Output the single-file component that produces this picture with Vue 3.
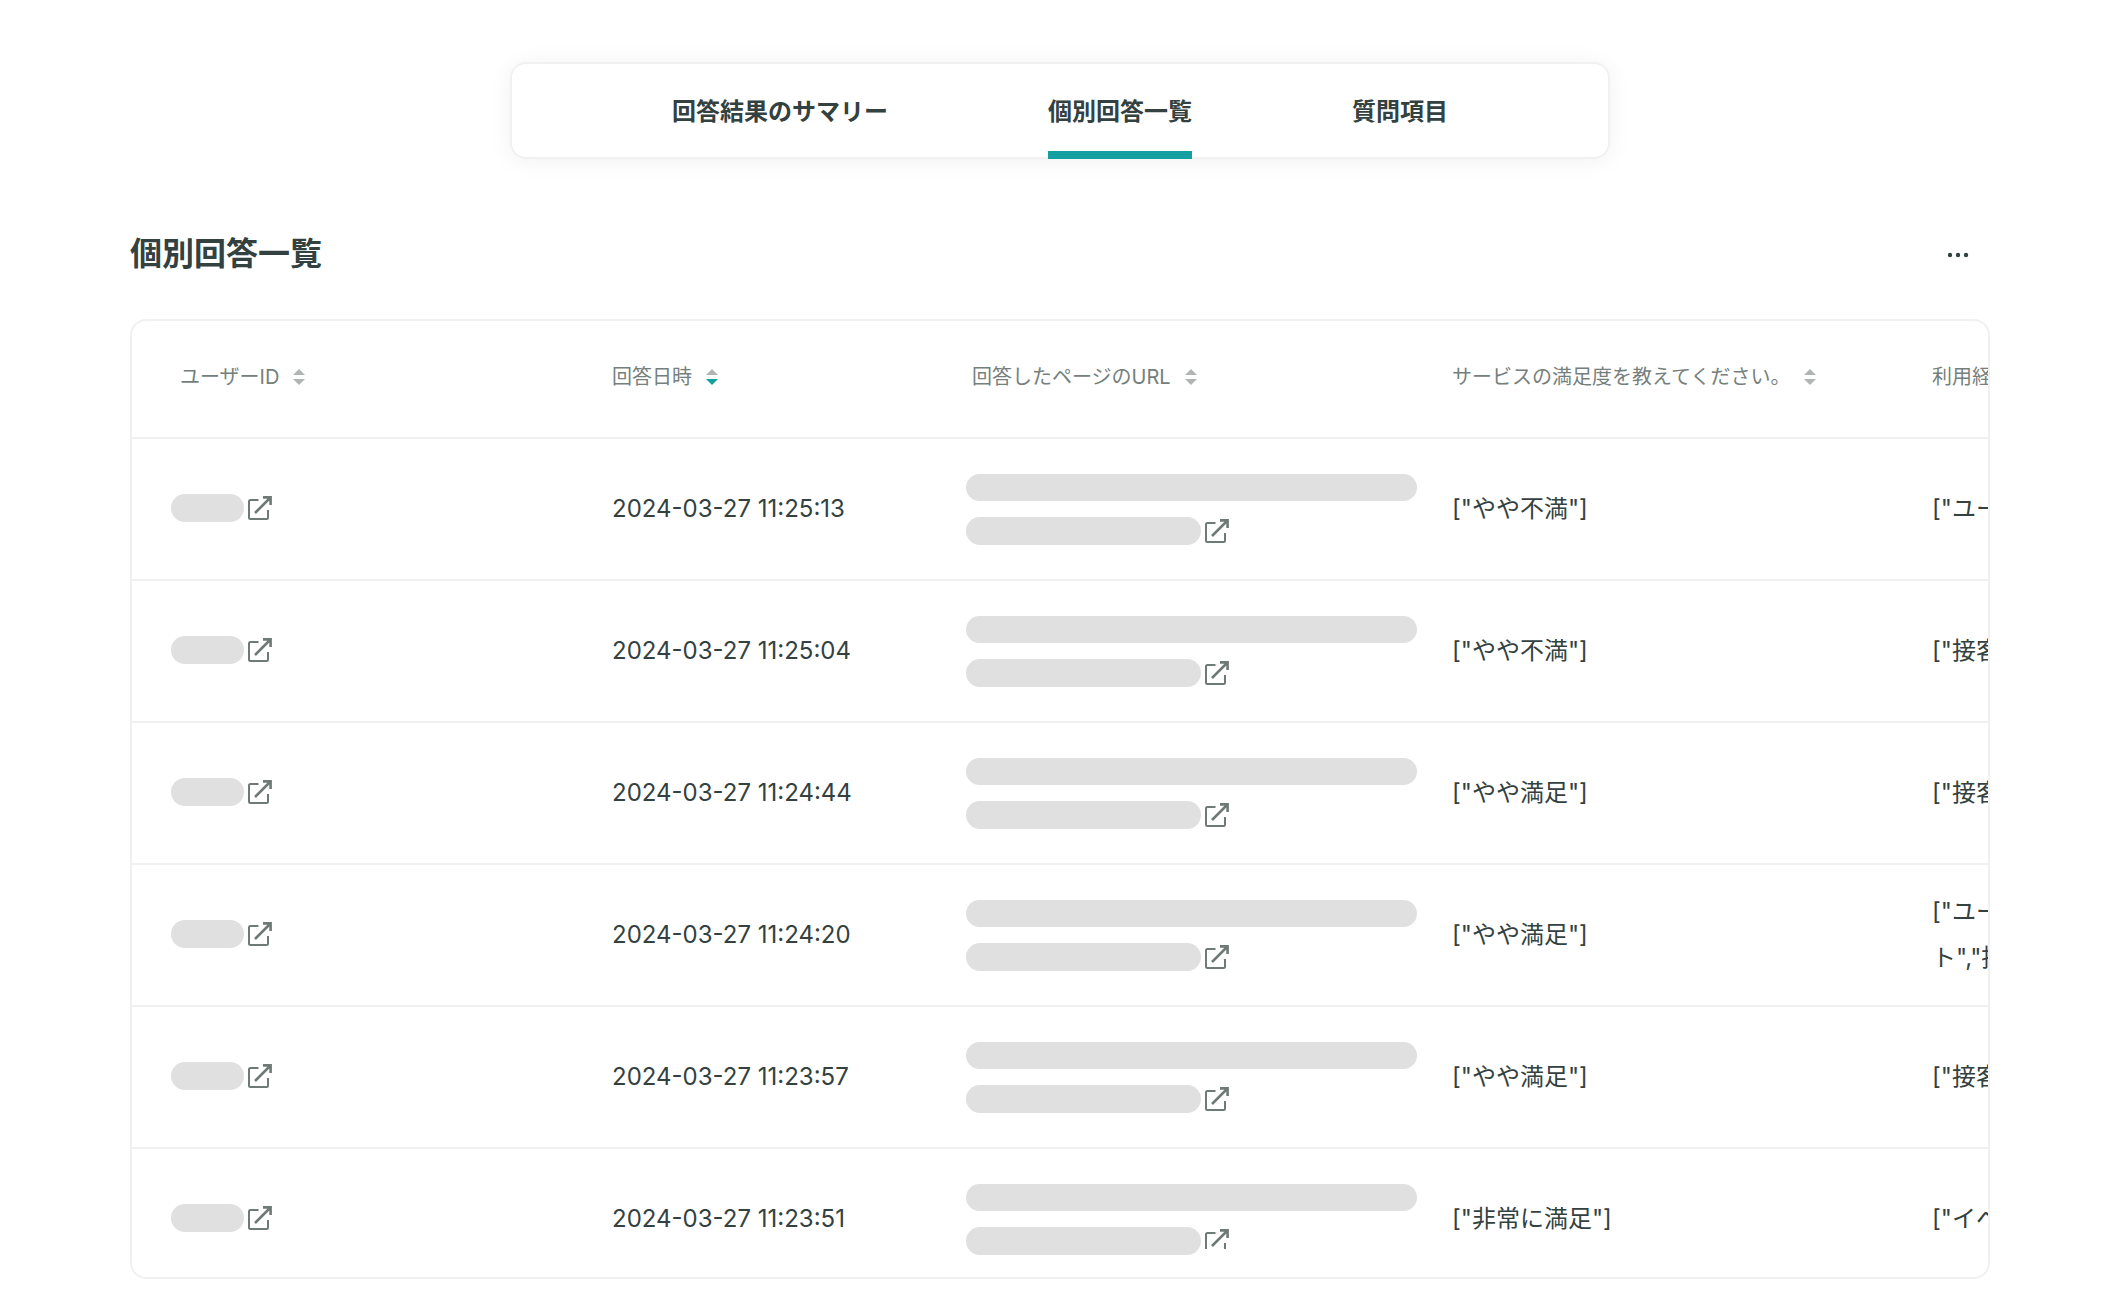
<script setup>
import { ref } from 'vue'

const tabs = ['回答結果のサマリー', '個別回答一覧', '質問項目']
const activeTab = ref('個別回答一覧')

const columns = [
  { key: 'user', label: 'ユーザーID' },
  { key: 'date', label: '回答日時' },
  { key: 'url', label: '回答したページのURL' },
  { key: 'rating', label: 'サービスの満足度を教えてください。' },
  { key: 'reason', label: '利用経験を教えてください。' },
]

const sortKey = ref('date')
const sortOrder = ref('desc')

const rows = [
  { date: '2024-03-27 11:25:13', rating: '["やや不満"]', reason: '["ユーザーサポート"]' },
  { date: '2024-03-27 11:25:04', rating: '["やや不満"]', reason: '["接客"]' },
  { date: '2024-03-27 11:24:44', rating: '["やや満足"]', reason: '["接客"]' },
  { date: '2024-03-27 11:24:20', rating: '["やや満足"]', reason: '["ユーザーサポー\nト","接客"]' },
  { date: '2024-03-27 11:23:57', rating: '["やや満足"]', reason: '["接客"]' },
  { date: '2024-03-27 11:23:51', rating: '["非常に満足"]', reason: '["イベント"]' },
]

function changeSort(key) {
  if (sortKey.value === key) {
    sortOrder.value = sortOrder.value === 'desc' ? 'asc' : 'desc'
  } else {
    sortKey.value = key
    sortOrder.value = 'desc'
  }
}

function isSorted(key, order) {
  return sortKey.value === key && sortOrder.value === order
}
</script>

<template>
  <div class="page">
    <nav class="tabs">
      <button
        v-for="tab in tabs"
        :key="tab"
        class="tab"
        :class="{ active: tab === activeTab }"
        @click="activeTab = tab"
      >
        {{ tab }}
      </button>
    </nav>

    <header class="header">
      <h1>{{ activeTab }}</h1>
      <button class="more" aria-label="メニュー">
        <svg width="22" height="6" viewBox="0 0 22 6">
          <circle cx="3" cy="3" r="2.2" />
          <circle cx="11" cy="3" r="2.2" />
          <circle cx="19" cy="3" r="2.2" />
        </svg>
      </button>
    </header>

    <main class="panel">
      <table class="answers">
        <colgroup>
          <col v-for="col in columns" :key="col.key" :class="'col-' + col.key" />
        </colgroup>
        <thead>
          <tr>
            <th v-for="col in columns" :key="col.key">
              <button class="sort" @click="changeSort(col.key)">
                <span>{{ col.label }}</span>
                <svg width="12" height="16" viewBox="0 0 12 16">
                  <path :class="{ on: isSorted(col.key, 'asc') }" d="M6 0L12 6H0Z" />
                  <path :class="{ on: isSorted(col.key, 'desc') }" d="M6 16L0 10H12Z" />
                </svg>
              </button>
            </th>
          </tr>
        </thead>
        <tbody>
          <tr v-for="row in rows" :key="row.date">
            <td class="user">
              <div class="line">
                <span class="mask mask-id"></span>
                <a href="#" class="link" aria-label="ユーザーを開く">
                  <svg width="24" height="24" viewBox="0 0 24 24">
                    <path d="M10.5 4H2.5Q1 4 1 5.5V21.5Q1 23 2.5 23H18.5Q20 23 20 21.5V14" />
                    <path class="arrow" d="M7 17L22 2M15 1.4H22.6V9" />
                  </svg>
                </a>
              </div>
            </td>
            <td>{{ row.date }}</td>
            <td class="url">
              <div class="mask mask-long"></div>
              <div class="line">
                <span class="mask mask-short"></span>
                <a href="#" class="link" aria-label="ページを開く">
                  <svg width="24" height="24" viewBox="0 0 24 24">
                    <path d="M10.5 4H2.5Q1 4 1 5.5V21.5Q1 23 2.5 23H18.5Q20 23 20 21.5V14" />
                    <path class="arrow" d="M7 17L22 2M15 1.4H22.6V9" />
                  </svg>
                </a>
              </div>
            </td>
            <td>{{ row.rating }}</td>
            <td class="reason">{{ row.reason }}</td>
          </tr>
        </tbody>
      </table>
    </main>
  </div>
</template>

<style>
body {
  background: #fff;
}
</style>

<style scoped>
.page {
  display: flex;
  flex-direction: column;
  box-sizing: border-box;
  height: 100vh;
  padding: 62px 131px 32px 130px;
  color: #334140;
  font-family: Inter, "Noto Sans CJK JP", sans-serif;
}

button {
  padding: 0;
  border: none;
  background: none;
  color: inherit;
  font-family: inherit;
  cursor: pointer;
}

.tabs {
  display: flex;
  align-self: center;
  gap: 160px;
  padding: 0 160px;
  border: 2px solid #f0f1f1;
  border-radius: 16px;
  background: #fff;
  box-shadow: 0 2px 24px rgba(0, 0, 0, 0.06);
}

.tab {
  margin-bottom: -2px;
  padding: 30px 0 21px;
  border-bottom: 8px solid transparent;
  font-size: 24px;
  font-weight: 700;
  line-height: 36px;
}

.tab.active {
  border-bottom-color: #14a0a0;
}

.header {
  display: flex;
  align-items: center;
  justify-content: space-between;
  margin: 62px 0 32px;
}

h1 {
  margin: 0;
  font-size: 32px;
  font-weight: 700;
  line-height: 66px;
}

.more {
  display: flex;
  align-items: center;
  justify-content: center;
  width: 64px;
  height: 64px;
  padding-top: 2px;
}

.more svg {
  fill: #334140;
}

.panel {
  flex: 1;
  min-height: 0;
  overflow: auto;
  scrollbar-width: none;
  border: 2px solid #f0f0f0;
  border-radius: 16px;
}

.answers {
  width: 2256px;
  table-layout: fixed;
  border-collapse: separate;
  border-spacing: 0;
}

.col-user {
  width: 456px;
}

.col-date {
  width: 360px;
}

.col-url,
.col-rating,
.col-reason {
  width: 480px;
}

th,
td {
  box-sizing: border-box;
  padding: 0 24px;
  border-bottom: 2px solid #f0f0f0;
  text-align: left;
  vertical-align: middle;
}

th {
  height: 118px;
  padding-bottom: 4px;
}

th:first-child {
  padding-left: 48px;
}

td {
  height: 142px;
  font-size: 24px;
  line-height: 46px;
}

.sort {
  display: flex;
  align-items: center;
  gap: 14px;
  color: #75807d;
  font-size: 20px;
  line-height: 32px;
}

.sort svg {
  fill: #b0b5b3;
}

.sort .on {
  fill: #14a0a0;
}

.line {
  display: flex;
  align-items: center;
  gap: 4px;
}

.user {
  padding-bottom: 2px;
  padding-left: 39px;
}

.url {
  padding: 0 0 0 18px;
}

.reason {
  white-space: pre-line;
}

.mask {
  height: 28px;
  border-radius: 14px;
  background: #e0e0e0;
}

.mask-id {
  width: 73px;
}

.mask-long {
  width: 451px;
  height: 27px;
  margin-bottom: 16px;
}

.mask-short {
  width: 235px;
}

.link {
  display: block;
  height: 24px;
  overflow: hidden;
}

/* the scroll area ends inside the last row */
tr:last-child .url .link {
  align-self: flex-start;
  height: 20px;
  margin-top: 2px;
}

.link svg {
  display: block;
  fill: none;
  stroke: #6f7a77;
  stroke-width: 2;
}

.link .arrow {
  stroke-width: 2.6;
}
</style>
